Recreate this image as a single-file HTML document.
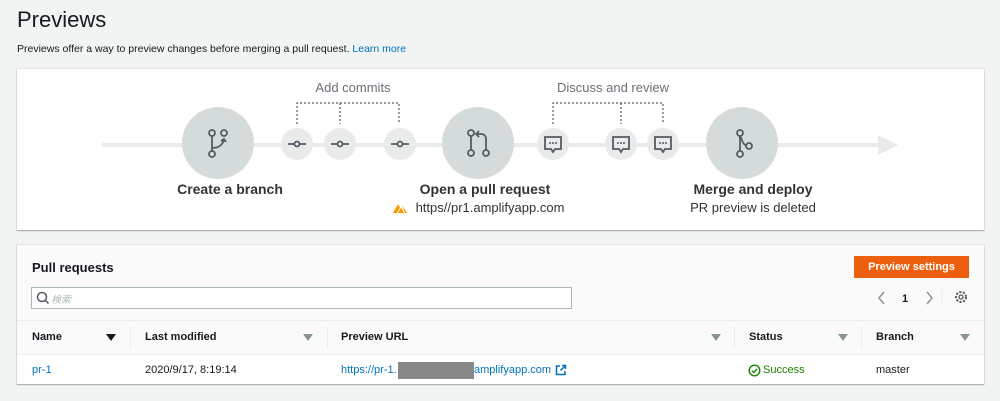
<!DOCTYPE html>
<html><head><meta charset="utf-8"><style>
*{box-sizing:border-box;margin:0;padding:0}
body{width:1000px;height:401px;background:#f2f3f3;font-family:"Liberation Sans","Noto Sans CJK JP",sans-serif;color:#16191f;position:relative;overflow:hidden}
h1{position:absolute;left:17px;top:7px;font-size:22px;font-weight:normal;color:#16191f}
.sub{position:absolute;left:17px;top:43px;font-size:10.5px;color:#16191f}
.sub a{color:#0073bb;text-decoration:none}
.card{position:absolute;left:17px;width:967px;background:#fff;box-shadow:0 1px 1px rgba(0,28,36,.3),0 0 0 1px rgba(0,28,36,.06)}
.abs{position:absolute}
.th{position:absolute;top:331px;font-size:11px;font-weight:bold;color:#16191f}
.tri{position:absolute;top:334px;width:0;height:0;border-left:5px solid transparent;border-right:5px solid transparent;border-top:7px solid #879596}
.sep{position:absolute;top:327px;width:1px;height:21px;background:#eaeded}
.td{position:absolute;top:364px;font-size:11px;color:#16191f;white-space:nowrap}
</style></head><body>
<h1>Previews</h1>
<div class="sub">Previews offer a way to preview changes before merging a pull request. <a>Learn more</a></div>
<div class="card" style="top:69px;height:161px"></div>
<svg class="abs" style="left:0;top:0" width="1000" height="240">
<line x1="102" y1="145" x2="880" y2="145" stroke="#e9ebeb" stroke-width="4"/>
<polygon points="878,135 898,145 878,155" fill="#e9ebeb"/>
<g stroke="#333" stroke-width="1" stroke-dasharray="2,2" fill="none">
<path d="M297 124V103H399V124M340 103V124"/>
<path d="M553 124V103H663V124M621 103V124"/>
</g>
<g fill="#d5dbdb"><circle cx="218" cy="143" r="36"/><circle cx="478" cy="143" r="36"/><circle cx="742" cy="143" r="36"/></g>
<g fill="#e9ebeb"><circle cx="297" cy="144" r="16"/><circle cx="340" cy="144" r="16"/><circle cx="400" cy="144" r="16"/><circle cx="553" cy="144" r="16"/><circle cx="621" cy="144" r="16"/><circle cx="663" cy="144" r="16"/></g>
<g stroke="#545b64" stroke-width="1.8" fill="none">
<path d="M288 144h6M300 144h6"/><circle cx="297" cy="144" r="2.5"/>
<path d="M331 144h6M343 144h6"/><circle cx="340" cy="144" r="2.5"/>
<path d="M391 144h6M403 144h6"/><circle cx="400" cy="144" r="2.5"/>
<circle cx="212" cy="133" r="3"/><circle cx="224" cy="133" r="3"/><circle cx="212" cy="154" r="3"/><path d="M212 136v15M212 148c5 0 10-2 12-8M221 141l3-2 2 3"/>
<circle cx="471" cy="133" r="3"/><circle cx="471" cy="153" r="3"/><circle cx="486" cy="153" r="3"/><path d="M471 136v14M486 150v-11c0-3-2-5-5-5h-4M479 131l-3 3 3 3"/>
<circle cx="740" cy="133" r="3"/><circle cx="740" cy="154" r="3"/><circle cx="749" cy="146" r="3"/><path d="M740 136v15M741 137c1 5 3 8 6 9"/>
</g>
<g stroke="#545b64" stroke-width="1.8" fill="none">
<path d="M545 137h16v12h-6l-2 3-2-3h-6z"/><path d="M613 137h16v12h-6l-2 3-2-3h-6z"/><path d="M655 137h16v12h-6l-2 3-2-3h-6z"/>
</g>
<g fill="#545b64"><circle cx="550" cy="143" r="1"/><circle cx="553" cy="143" r="1"/><circle cx="556" cy="143" r="1"/><circle cx="618" cy="143" r="1"/><circle cx="621" cy="143" r="1"/><circle cx="624" cy="143" r="1"/><circle cx="660" cy="143" r="1"/><circle cx="663" cy="143" r="1"/><circle cx="666" cy="143" r="1"/></g>
<g font-family="Liberation Sans, sans-serif" text-anchor="middle">
<text x="353" y="92" font-size="13" fill="#687078">Add commits</text>
<text x="613" y="92" font-size="13" fill="#687078">Discuss and review</text>
<text x="230" y="194" font-size="14" font-weight="bold" fill="#333">Create a branch</text>
<text x="485" y="194" font-size="14" font-weight="bold" fill="#333">Open a pull request</text>
<text x="490" y="212" font-size="13" fill="#333">https//pr1.amplifyapp.com</text>
<text x="753" y="194" font-size="14" font-weight="bold" fill="#333">Merge and deploy</text>
<text x="753" y="212" font-size="13" fill="#333">PR preview is deleted</text>
</g>
<path d="M393 213l5-9 2 3.5-3 5.5zM398 213l3-5.5 3 5.5zM402 205l5 8h-2z" fill="#f90"/>
</svg>

<div class="card" style="top:245px;height:139px;background:#fafafa"></div>
<div class="abs" style="left:17px;top:320px;width:967px;height:1px;background:#eaeded"></div>
<div class="abs" style="left:17px;top:354px;width:967px;height:30px;background:#fff;border-top:1px solid #eaeded"></div>
<div class="abs" style="left:32px;top:260px;font-size:13px;font-weight:bold">Pull requests</div>
<div class="abs" style="left:854px;top:256px;width:115px;height:22px;background:#ec5f0f;color:#fff;font-size:11px;font-weight:bold;text-align:center;line-height:22px">Preview settings</div>
<div class="abs" style="left:31px;top:287px;width:541px;height:22px;background:#fff;border:1px solid #aab7b8"></div>
<svg class="abs" style="left:36px;top:291px" width="14" height="14"><circle cx="6" cy="6" r="4.5" stroke="#545b64" stroke-width="1.5" fill="none"/><path d="M9.5 9.5l3 3" stroke="#545b64" stroke-width="1.5"/></svg>
<div class="abs" style="left:51px;top:291px;font-size:10px;color:#aab7b8;font-style:italic">検索</div>
<svg class="abs" style="left:876px;top:290px" width="80" height="16"><path d="M8 2l-5 6 5 6M51 2l5 6-5 6" stroke="#879596" stroke-width="1.5" fill="none"/><text x="29" y="12" font-size="11" font-weight="bold" font-family="Liberation Sans" fill="#16191f" text-anchor="middle">1</text><line x1="66" y1="0" x2="66" y2="16" stroke="#eaeded"/></svg>
<svg class="abs" style="left:954px;top:290px" width="14" height="14"><circle cx="7" cy="7" r="5" stroke="#545b64" stroke-width="2" stroke-dasharray="2.2,1.4" fill="none"/><circle cx="7" cy="7" r="2" stroke="#545b64" stroke-width="1.3" fill="none"/></svg>
<div class="th" style="left:32px">Name</div><div class="tri" style="left:106px;border-top-color:#16191f"></div><div class="sep" style="left:130px"></div>
<div class="th" style="left:145px">Last modified</div><div class="tri" style="left:303px"></div><div class="sep" style="left:327px"></div>
<div class="th" style="left:341px">Preview URL</div><div class="tri" style="left:711px"></div><div class="sep" style="left:734px"></div>
<div class="th" style="left:749px">Status</div><div class="tri" style="left:838px"></div><div class="sep" style="left:861px"></div>
<div class="th" style="left:876px">Branch</div><div class="tri" style="left:960px"></div>
<div class="td" style="left:32px;color:#0073bb">pr-1</div>
<div class="td" style="left:145px">2020/9/17, 8:19:14</div>
<div class="td" style="left:341px;color:#0073bb">https://pr-1.</div>
<div class="abs" style="left:398px;top:362px;width:76px;height:17px;background:#888"></div>
<div class="td" style="left:474px;color:#0073bb">amplifyapp.com</div>
<svg class="abs" style="left:555px;top:364px" width="12" height="12"><path d="M5 2H1.5v8.5H10V7M7 1.5h3.5V5M10.5 1.5L5.5 6.5" stroke="#0073bb" stroke-width="1.5" fill="none"/></svg>
<svg class="abs" style="left:748px;top:364px" width="13" height="13"><circle cx="6.5" cy="6.5" r="5.3" stroke="#1d8102" stroke-width="1.4" fill="none"/><path d="M4 6.7l1.8 1.8L9 5" stroke="#1d8102" stroke-width="1.4" fill="none"/></svg>
<div class="td" style="left:763px;color:#1d8102">Success</div>
<div class="td" style="left:876px">master</div>
</body></html>
